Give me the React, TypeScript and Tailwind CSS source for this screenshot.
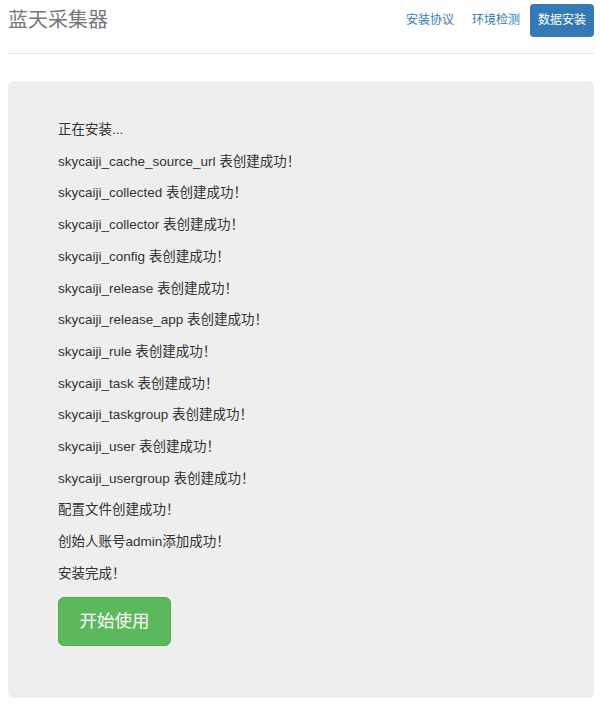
import React from "react";

const tables = [
  "skycaiji_cache_source_url",
  "skycaiji_collected",
  "skycaiji_collector",
  "skycaiji_config",
  "skycaiji_release",
  "skycaiji_release_app",
  "skycaiji_rule",
  "skycaiji_task",
  "skycaiji_taskgroup",
  "skycaiji_user",
  "skycaiji_usergroup",
];

const font = {
  fontFamily: '"Liberation Sans", Arial, "Noto Sans CJK SC", sans-serif',
};

export default function App() {
  const lines = [
    "正在安装...",
    ...tables.map((t) => `${t} 表创建成功！`),
    "配置文件创建成功！",
    "创始人账号admin添加成功！",
    "安装完成！",
  ];

  return (
    <div className="min-h-screen bg-white pl-[8px] pr-[6px] text-[#333]" style={font}>
      {/* header */}
      <div className="flex items-start justify-between border-b border-[#e5e5e5] h-[54px]">
        <h3 className="mt-[8px] text-[20px] leading-[24px] text-[#777]">蓝天采集器</h3>
        <ul className="flex gap-[2px] mt-[4px]">
          <li>
            <a className="block px-[8px] py-[8px] text-[12px] leading-[17px] text-[#337ab7] rounded-[4px]">安装协议</a>
          </li>
          <li>
            <a className="block px-[8px] py-[8px] text-[12px] leading-[17px] text-[#337ab7] rounded-[4px]">环境检测</a>
          </li>
          <li>
            <a className="block px-[8px] py-[8px] text-[12px] leading-[17px] text-white bg-[#337ab7] rounded-[4px]">数据安装</a>
          </li>
        </ul>
      </div>

      {/* install log */}
      <div className="mt-[27px] bg-[#eeeeee] rounded-[6px] pl-[50px] pr-[50px] pt-[38px] pb-[52px]">
        {lines.map((l, i) => (
          <p key={i} className="text-[13.5px] leading-[21.7px] mb-[10px]">
            {l}
          </p>
        ))}
        <button className="mt-[2px] h-[49px] px-[20.5px] text-[17.5px] text-white bg-[#5cb85c] border border-[#4cae4c] rounded-[6px]">
          开始使用
        </button>
      </div>
    </div>
  );
}
